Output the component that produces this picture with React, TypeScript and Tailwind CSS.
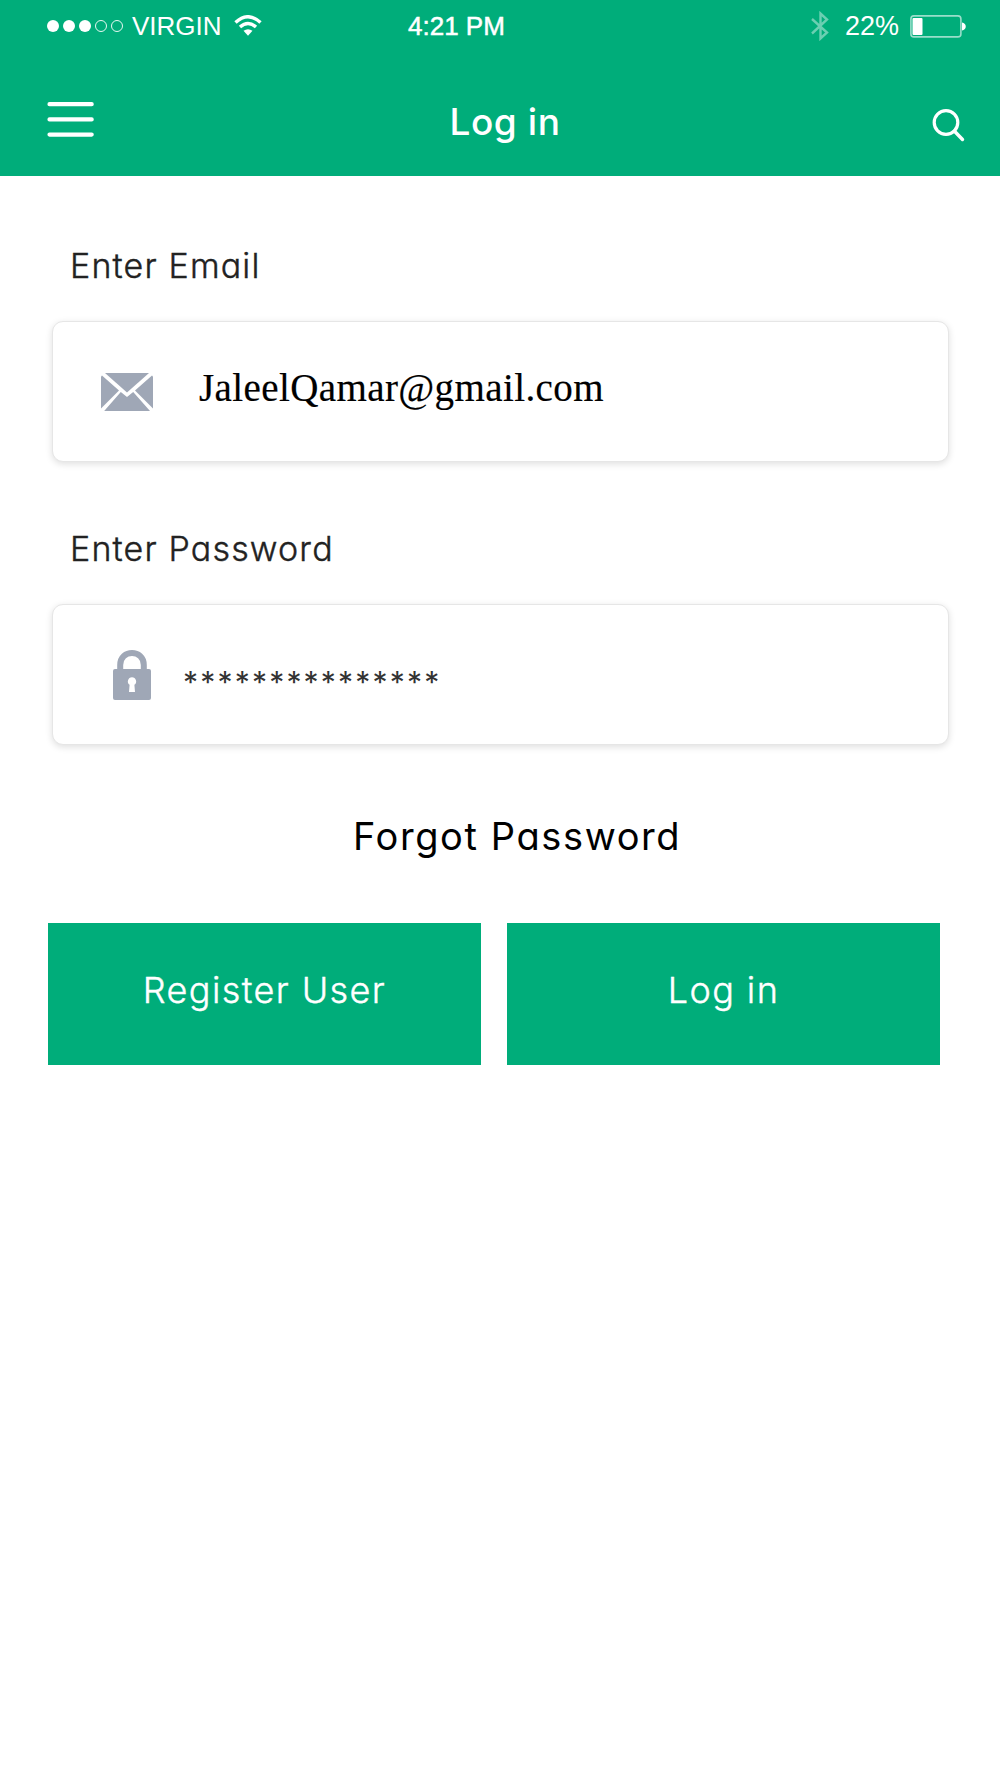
const BluetoothIcon = () => (
  <svg width="18" height="30" viewBox="0 0 18 30" fill="none">
    <path
      d="M1 8L16 21.5L9.5 27.5V2.5L16 8.5L1 22.5"
      stroke="#fff"
      strokeOpacity="0.42"
      strokeWidth="2.4"
    />
  </svg>
);

const WifiIcon = () => (
  <svg width="28" height="22" viewBox="0 0 28 22" fill="none">
    <path d="M1.5 7.5Q14 -4 26.5 7.5" stroke="#fff" strokeWidth="3.4" />
    <path d="M6 12Q14 5 22 12" stroke="#fff" strokeWidth="3.4" />
    <path d="M9.5 15.8Q14 12.6 18.5 15.8L14 20.8Z" fill="#fff" />
  </svg>
);

const BatteryIcon = () => (
  <svg width="57" height="23" viewBox="0 0 57 23" fill="none">
    <rect
      x="0.9"
      y="0.9"
      width="50"
      height="21"
      rx="3"
      stroke="#fff"
      strokeOpacity="0.6"
      strokeWidth="1.6"
    />
    <rect x="2.5" y="3" width="10" height="17" rx="1" fill="#fff" />
    <path d="M52 7.5C57 8 57 15 52 15.5Z" fill="#fff" />
  </svg>
);

const SearchIcon = () => (
  <svg width="33" height="33" viewBox="0 0 33 33" fill="none">
    <circle cx="14" cy="13.5" r="11.8" stroke="#fff" strokeWidth="3.2" />
    <path
      d="M22.3 22L30.5 30.5"
      stroke="#fff"
      strokeWidth="3.4"
      strokeLinecap="round"
    />
  </svg>
);

const MailIcon = () => (
  <svg width="52" height="38" viewBox="0 0 52 38" fill="#9fa7b6">
    <path d="M4 0H48L26 19.5Z" />
    <path d="M1 2.5L18 17.5L0 35.5V3.5Z" />
    <path d="M51 2.5L34 17.5L52 35.5V3.5Z" />
    <path d="M19.8 19L26 24L32.2 19L49 38H3.2Z" />
  </svg>
);

const LockIcon = () => (
  <svg width="38" height="50" viewBox="0 0 38 50">
    <path
      d="M7.2 20V15C7.2 -1 30.8 -1 30.8 15V20"
      fill="none"
      stroke="#9fa7b6"
      strokeWidth="6"
    />
    <rect y="19" width="38" height="31" rx="2" fill="#9fa7b6" />
    <path
      d="M19 27.2A4.2 4.2 0 0 1 21.4 34.8L22 42H16L16.6 34.8A4.2 4.2 0 0 1 19 27.2Z"
      fill="#fff"
    />
  </svg>
);

const SignalDots = () => (
  <div className="flex gap-1">
    {[true, true, true, false, false].map((filled, i) => (
      <span
        key={i}
        className={
          filled
            ? "size-3 rounded-full bg-white"
            : "size-3 rounded-full border border-white/90"
        }
      />
    ))}
  </div>
);

const StatusBar = () => (
  <div className="flex h-[52px] items-center pr-[33px] pl-[47px] font-['Liberation_Sans',sans-serif] text-[26px]">
    <div className="flex w-[361px] items-center">
      <SignalDots />
      <span className="ml-[9px]">VIRGIN</span>
      <span className="ml-[12px]">
        <WifiIcon />
      </span>
    </div>
    <span className="[-webkit-text-stroke:0.5px_white]">4:21 PM</span>
    <div className="ml-auto flex items-center">
      <BluetoothIcon />
      <span className="ml-4 text-[27px]">22%</span>
      <span className="ml-[11px]">
        <BatteryIcon />
      </span>
    </div>
  </div>
);

const Header = () => (
  <header className="h-[176px] bg-[#00ad7a] text-white">
    <StatusBar />
    <div className="flex justify-between pt-[50px] pr-[35px] pl-[47px]">
      <svg width="47" height="36" viewBox="0 0 47 36">
        <path
          d="M2.5 2.2H44.7M2.5 17.4H44.7M2.5 32.6H44.7"
          stroke="#fff"
          strokeWidth="4.2"
          strokeLinecap="round"
        />
      </svg>
      <h1 className="-mt-[4px] -ml-[16px] text-[37px] leading-[48px] font-medium tracking-[0.6px]">
        Log in
      </h1>
      <div className="mt-[7px]">
        <SearchIcon />
      </div>
    </div>
  </header>
);

interface FieldProps {
  label: string;
  children: React.ReactNode;
}

const Field: React.FC<FieldProps> = ({ label, children }) => (
  <div>
    <label className="ml-[18px] block text-[34px] leading-[40px] font-light tracking-[1.15px] text-[#222] [-webkit-text-stroke:0.4px_#222]">
      {label}
    </label>
    <div className="mt-[35px] flex h-[141px] w-[897px] rounded-[11px] border border-[#e6e6e6] bg-white shadow-[0_2px_7px_rgba(0,0,0,0.13)]">
      {children}
    </div>
  </div>
);

const App = () => {
  return (
    <div className="min-h-[1778px] w-[1000px] bg-white font-['Inter',sans-serif] [font-feature-settings:'cv11']">
      <Header />
      <main className="pt-[70px] pl-[52px]">
        <Field label="Enter Email">
          <span className="mt-[51px] ml-[48px]">
            <MailIcon />
          </span>
          <span className="mt-[44px] ml-[46px] font-['Liberation_Serif',serif] text-[39px] leading-[44px] tracking-[0.4px] text-black [-webkit-text-stroke:0.2px_black]">
            JaleelQamar@gmail.com
          </span>
        </Field>
        <div className="mt-[67px]">
          <Field label="Enter Password">
            <span className="mt-[45px] ml-[60px]">
              <LockIcon />
            </span>
            <span className="mt-[57px] ml-[32px] text-[30px] leading-[40px] tracking-[2.2px] text-[#333]">
              ***************
            </span>
          </Field>
        </div>
        <a className="mt-[67px] ml-[301px] block w-max text-[38px] leading-[48px] tracking-[1.6px] text-black">
          Forgot Password
        </a>
        <div className="mt-[63px] -ml-[4px] flex gap-[26px] text-[36px] font-light tracking-[1.4px] text-white [-webkit-text-stroke:0.4px_white]">
          <button className="h-[142px] w-[433px] bg-[#00ad7a] pb-[8px]">
            Register User
          </button>
          <button className="h-[142px] w-[433px] bg-[#00ad7a] pb-[8px]">
            Log in
          </button>
        </div>
      </main>
    </div>
  );
};

export default App;
